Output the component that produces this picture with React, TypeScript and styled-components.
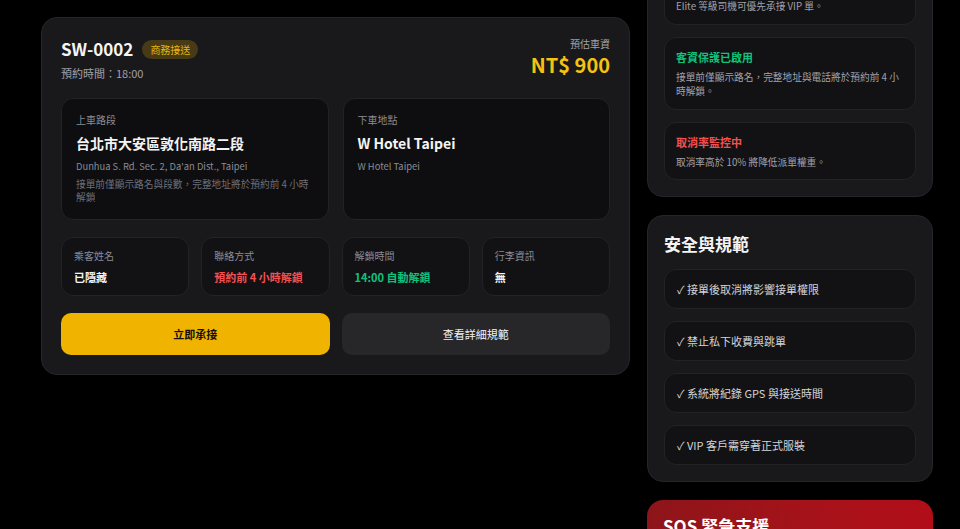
import { createGlobalStyle, styled } from "styled-components";

const COLOR = {
  page: "#000000",
  card: "#19191c",
  cardBorder: "#26262a",
  inner: "#0e0e10",
  cell: "#121215",
  innerBorder: "#232327",
  white: "#f4f4f5",
  text: "#d4d4d8",
  muted: "#a1a1aa",
  dim: "#8b8b93",
  faint: "#6f6f78",
  yellow: "#f5c211",
  button: "#f0b400",
  green: "#10c27c",
  red: "#f25050",
};

const GlobalStyle = createGlobalStyle`
  html, body {
    margin: 0;
    padding: 0;
    background: ${COLOR.page};
    overflow: hidden;
  }
  body {
    font-family: "Noto Sans CJK TC", "Noto Sans", sans-serif;
    color: ${COLOR.white};
  }
  * {
    box-sizing: border-box;
  }
`;

// the screenshot is taken scrolled down; the page is shifted by that amount
const Page = styled.main`
  display: grid;
  grid-template-columns: 589px 286px;
  column-gap: 17px;
  align-items: start;
  padding-left: 41px;
  margin-top: -88px;
`;

const MainColumn = styled.section`
  padding-top: 105px;
`;

const SideColumn = styled.aside`
  display: flex;
  flex-direction: column;
  gap: 18px;
`;

const OrderCard = styled.div`
  display: flex;
  flex-direction: column;
  gap: 17px;
  background: ${COLOR.card};
  border: 1px solid ${COLOR.cardBorder};
  border-radius: 16px;
  padding: 19px 19px 19px;
`;

const Header = styled.div`
  display: flex;
  justify-content: space-between;
  align-items: flex-start;
  .titleRow {
    display: flex;
    align-items: center;
    gap: 9px;
    height: 24px;
  }
  .orderNo {
    font-size: 17px;
    font-weight: 700;
    line-height: 24px;
  }
  .badge {
    height: 19px;
    padding: 0 8px;
    border-radius: 10px;
    background: rgba(234, 179, 8, 0.22);
    color: #e8b70c;
    font-size: 10px;
    line-height: 19px;
  }
  .schedule {
    margin-top: 4px;
    font-size: 11px;
    line-height: 16px;
    color: ${COLOR.muted};
  }
  .fare {
    text-align: right;
  }
  .fareLabel {
    font-size: 10px;
    line-height: 14px;
    color: ${COLOR.muted};
  }
  .fareValue {
    margin-top: 1px;
    font-size: 20px;
    font-weight: 700;
    line-height: 26px;
    color: ${COLOR.yellow};
  }
`;

const AddressRow = styled.div`
  display: grid;
  grid-template-columns: 1fr 1fr;
  gap: 14px;
`;

const AddressCard = styled.div`
  display: flex;
  flex-direction: column;
  background: ${COLOR.inner};
  border: 1px solid ${COLOR.innerBorder};
  border-radius: 12px;
  padding: 14px 13px 15px 14px;
  .label {
    font-size: 10px;
    line-height: 14px;
    color: ${COLOR.dim};
  }
  .place {
    margin-top: 6px;
    font-size: 14px;
    font-weight: 700;
    line-height: 20px;
    color: ${COLOR.white};
  }
  .english {
    margin-top: 6px;
    font-size: 9.4px;
    line-height: 14px;
    color: ${COLOR.dim};
  }
  .note {
    margin-top: 5px;
    font-size: 9.7px;
    line-height: 13px;
    color: ${COLOR.faint};
  }
`;

const InfoRow = styled.div`
  display: grid;
  grid-template-columns: repeat(4, 1fr);
  gap: 12px;
`;

const InfoCell = styled.div<{ $tone?: "red" | "green" }>`
  background: ${COLOR.cell};
  border: 1px solid ${COLOR.innerBorder};
  border-radius: 12px;
  padding: 11px 12px 10px;
  .label {
    font-size: 10px;
    line-height: 14px;
    color: ${COLOR.dim};
  }
  .value {
    margin-top: 6px;
    font-size: 11px;
    font-weight: 700;
    line-height: 16px;
    color: ${(p) => (p.$tone === "red" ? COLOR.red : p.$tone === "green" ? COLOR.green : COLOR.white)};
  }
`;

const ActionRow = styled.div`
  display: grid;
  grid-template-columns: 1fr 1fr;
  gap: 12px;
`;

const ActionButton = styled.button<{ $primary?: boolean }>`
  height: 42px;
  border: none;
  border-radius: 10px;
  font-family: inherit;
  font-size: 11px;
  font-weight: ${(p) => (p.$primary ? 700 : 400)};
  background: ${(p) => (p.$primary ? COLOR.button : "#27272a")};
  color: ${(p) => (p.$primary ? "#111111" : COLOR.white)};
  cursor: pointer;
`;

const SideCard = styled.div`
  display: flex;
  flex-direction: column;
  gap: 12px;
  background: ${COLOR.card};
  border: 1px solid ${COLOR.cardBorder};
  border-radius: 16px;
  padding: 16px;
  .cardTitle {
    font-size: 17px;
    font-weight: 700;
    line-height: 24px;
    margin-bottom: 1px;
    color: ${COLOR.white};
  }
`;

const NoticeItem = styled.div<{ $tone: "yellow" | "green" | "red" }>`
  background: ${COLOR.cell};
  border: 1px solid ${COLOR.innerBorder};
  border-radius: 12px;
  padding: 11px 11px 10px 11px;
  .noticeTitle {
    font-size: 11px;
    font-weight: 700;
    line-height: 16px;
    color: ${(p) => (p.$tone === "green" ? COLOR.green : p.$tone === "red" ? COLOR.red : COLOR.yellow)};
  }
  .noticeBody {
    margin-top: 5px;
    font-size: 9.7px;
    line-height: 14.5px;
    color: ${COLOR.muted};
  }
`;

const RuleItem = styled.div`
  display: flex;
  align-items: center;
  height: 40px;
  padding: 0 12px;
  background: ${COLOR.cell};
  border: 1px solid ${COLOR.innerBorder};
  border-radius: 12px;
  font-size: 11px;
  color: ${COLOR.text};
`;

const SosCard = styled.div`
  border-radius: 16px;
  padding: 14px 16px 20px;
  background: linear-gradient(100deg, #8c1519 0%, #a8121a 60%, #b20d18 100%);
  .sosTitle {
    font-size: 17px;
    font-weight: 700;
    line-height: 24px;
    color: #ffffff;
  }
  .sosBody {
    margin-top: 6px;
    font-size: 10px;
    line-height: 14px;
    color: #fecaca;
  }
`;

const infoCells: { label: string; value: string; tone?: "red" | "green" }[] = [
  { label: "乘客姓名", value: "已隱藏" },
  { label: "聯絡方式", value: "預約前 4 小時解鎖", tone: "red" },
  { label: "解鎖時間", value: "14:00 自動解鎖", tone: "green" },
  { label: "行李資訊", value: "無" },
];

const notices: { title: string; body: string; tone: "yellow" | "green" | "red" }[] = [
  { title: "VIP 優先派單", body: "Elite 等級司機可優先承接 VIP 單。", tone: "yellow" },
  { title: "客資保護已啟用", body: "接單前僅顯示路名，完整地址與電話將於預約前 4 小時解鎖。", tone: "green" },
  { title: "取消率監控中", body: "取消率高於 10% 將降低派單權重。", tone: "red" },
];

const rules = [
  "✓ 接單後取消將影響接單權限",
  "✓ 禁止私下收費與跳單",
  "✓ 系統將紀錄 GPS 與接送時間",
  "✓ VIP 客戶需穿著正式服裝",
];

const App = () => {
  return (
    <>
      <GlobalStyle />
      <Page>
        <MainColumn>
          <OrderCard>
            <Header>
              <div>
                <div className="titleRow">
                  <span className="orderNo">SW-0002</span>
                  <span className="badge">商務接送</span>
                </div>
                <div className="schedule">預約時間：18:00</div>
              </div>
              <div className="fare">
                <div className="fareLabel">預估車資</div>
                <div className="fareValue">NT$ 900</div>
              </div>
            </Header>

            <AddressRow>
              <AddressCard>
                <div className="label">上車路段</div>
                <div className="place">台北市大安區敦化南路二段</div>
                <div className="english">Dunhua S. Rd. Sec. 2, Da'an Dist., Taipei</div>
                <div className="note">接單前僅顯示路名與段數，完整地址將於預約前 4 小時解鎖</div>
              </AddressCard>
              <AddressCard>
                <div className="label">下車地點</div>
                <div className="place">W Hotel Taipei</div>
                <div className="english">W Hotel Taipei</div>
              </AddressCard>
            </AddressRow>

            <InfoRow>
              {infoCells.map((el) => (
                <InfoCell key={el.label} $tone={el.tone}>
                  <div className="label">{el.label}</div>
                  <div className="value">{el.value}</div>
                </InfoCell>
              ))}
            </InfoRow>

            <ActionRow>
              <ActionButton $primary>立即承接</ActionButton>
              <ActionButton>查看詳細規範</ActionButton>
            </ActionRow>
          </OrderCard>
        </MainColumn>

        <SideColumn>
          <SideCard>
            <div className="cardTitle">派單狀態</div>
            {notices.map((el) => (
              <NoticeItem key={el.title} $tone={el.tone}>
                <div className="noticeTitle">{el.title}</div>
                <div className="noticeBody">{el.body}</div>
              </NoticeItem>
            ))}
          </SideCard>

          <SideCard>
            <div className="cardTitle">安全與規範</div>
            {rules.map((rule) => (
              <RuleItem key={rule}>{rule}</RuleItem>
            ))}
          </SideCard>

          <SosCard>
            <div className="sosTitle">SOS 緊急支援</div>
            <div className="sosBody">行程中如遇緊急狀況，請立即聯繫客服中心。</div>
          </SosCard>
        </SideColumn>
      </Page>
    </>
  );
};

export default App;
